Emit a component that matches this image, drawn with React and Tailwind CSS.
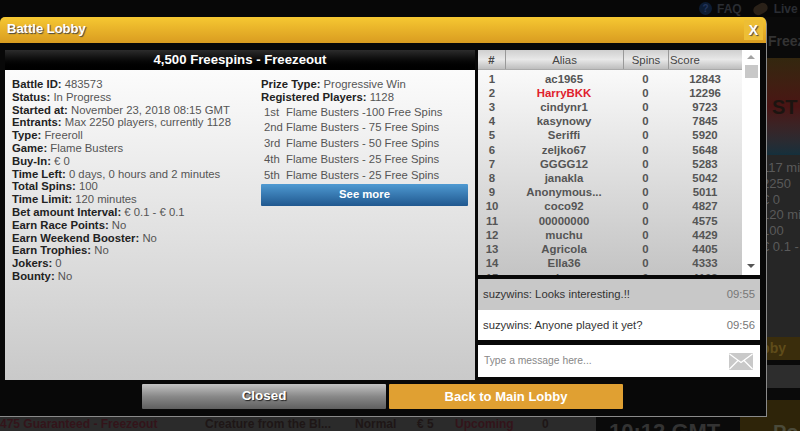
import React from "react";

const details = [
    ["Battle ID:", "483573"],
    ["Status:", "In Progress"],
    ["Started at:", "November 23, 2018 08:15 GMT"],
    ["Entrants:", "Max 2250 players, currently 1128"],
    ["Type:", "Freeroll"],
    ["Game:", "Flame Busters"],
    ["Buy-In:", "€ 0"],
    ["Time Left:", "0 days, 0 hours and 2 minutes"],
    ["Total Spins:", "100"],
    ["Time Limit:", "120 minutes"],
    ["Bet amount Interval:", "€ 0.1 - € 0.1"],
    ["Earn Race Points:", "No"],
    ["Earn Weekend Booster:", "No"],
    ["Earn Trophies:", "No"],
    ["Jokers:", "0"],
    ["Bounty:", "No"],
];

const prizes = [
    ["1st", "Flame Busters -100 Free Spins"],
    ["2nd", "Flame Busters - 75 Free Spins"],
    ["3rd", "Flame Busters - 50 Free Spins"],
    ["4th", "Flame Busters - 25 Free Spins"],
    ["5th", "Flame Busters - 25 Free Spins"],
];

const players = [
    ["ac1965", "12843"],
    ["HarryBKK", "12296"],
    ["cindynr1", "9723"],
    ["kasynowy", "7845"],
    ["Seriffi", "5920"],
    ["zeljko67", "5648"],
    ["GGGG12", "5283"],
    ["janakla", "5042"],
    ["Anonymous...", "5011"],
    ["coco92", "4827"],
    ["00000000", "4575"],
    ["muchu", "4429"],
    ["Agricola", "4405"],
    ["Ella36", "4333"],
    ["alexa", "4102"],
];

const Row = ({ label, value }) => (
    <div className="h-[12.8px] leading-[12.8px] whitespace-nowrap">
        <span className="font-bold text-[#222]">{label}</span> {value}
    </div>
);

// dimmed lobby page that sits behind the dialog
const Background = () => (
    <div className="h-full flex flex-col text-[12px] font-bold">
        <div className="h-[17px] flex items-center pl-[699px] text-[#2a2d33] whitespace-nowrap overflow-hidden">
            <span className="w-[13px] h-[13px] shrink-0 rounded-full bg-[#0c1c33] text-[#23345a] text-[10px] leading-[13px] text-center">?</span>
            <span className="ml-[5px]">FAQ</span>
            <span className="ml-[11px] w-[15px] h-[10px] shrink-0 rounded-[5px] bg-[#2a2118] -rotate-30"></span>
            <span className="ml-[6px]">Live Chat</span>
        </div>
        <div className="h-[400px] shrink-0 pl-[762px] flex flex-col overflow-hidden">
            <div className="h-[41px] shrink-0 pt-[14px] pl-[6px] text-[14px] text-[#333] whitespace-nowrap bg-[#0a0a0a]">Freezeout</div>
            <div className="h-[97px] shrink-0 bg-gradient-to-b from-[#33270f] via-[#4a1414] to-[#14303c] flex items-center text-[20px] text-[#1c1410] pl-[10px]">ST</div>
            <div className="h-[182px] shrink-0 pt-[5px] bg-[#262626] text-[#5a5a5a] font-normal text-[13px] leading-[15.8px] whitespace-nowrap">
                <div>117 min</div>
                <div>2250</div>
                <div>€ 0</div>
                <div>120 min</div>
                <div>100</div>
                <div>€ 0.1 - €</div>
            </div>
            <div className="h-[23px] shrink-0 bg-[#3a2d0c] text-[#5f4c1a] text-[14px] leading-[23px] whitespace-nowrap -ml-[18px] pl-[18px]">
                <span className="-ml-[18px]">Lobby</span>
            </div>
            <div className="h-[5px] shrink-0 bg-[#0a0a0a]"></div>
            <div className="h-[23px] shrink-0 bg-[#2d2d2d]"></div>
            <div className="h-[12px] shrink-0 bg-[#0a0a0a]"></div>
            <div className="flex-1 bg-[#2e2409]"></div>
        </div>
        <div className="h-[14px] shrink-0 flex items-start bg-[#2b2b2b] text-[#33141a] leading-[14px] whitespace-nowrap overflow-hidden">
            <span className="w-[205px] shrink-0">475 Guaranteed - Freezeout</span>
            <span className="w-[150px] shrink-0 text-[#1e1616]">Creature from the Bl...</span>
            <span className="w-[62px] shrink-0 text-[#1e1616]">Normal</span>
            <span className="w-[38px] shrink-0 text-[#1e1616]">€ 5</span>
            <span className="w-[87px] shrink-0">Upcoming</span>
            <span className="w-[54px] shrink-0 text-[#1e1616]">0</span>
            <span className="w-[144px] shrink-0 h-full bg-[#0a0a0a] text-[#333] text-[22px] leading-[30px] pl-[13px]">10:12 GMT</span>
            <span className="flex-1 h-full bg-[#2e2409] text-[#4a4a3a] text-[20px] leading-[30px] pl-[33px]">Po</span>
        </div>
    </div>
);

const App = () => {
    return (
        <div className="relative w-[800px] h-[431px] overflow-hidden bg-[#070707] font-['Liberation_Sans',Arial,sans-serif]">
            <Background />

            {/* Battle lobby dialog */}
            <div className="absolute left-0 top-[17px] w-[767px] h-[400px] flex flex-col bg-[#080808] rounded-tr-[7px] rounded-tl-[3px] border-r border-b border-[#8a8a8a]">
                <header className="h-[26px] shrink-0 flex items-center justify-between rounded-t-[5px] bg-gradient-to-b from-[#f6c832] to-[#d99c20] pl-[7px] pr-[3px]">
                    <h1 className="pb-[2px] text-[13px] font-bold text-white [text-shadow:1px_1px_1px_#444]">Battle Lobby</h1>
                    <button className="w-[19px] h-[20px] bg-[#edbe35] text-[14px] font-bold text-white [text-shadow:1px_1px_1px_#444]">X</button>
                </header>

                <div className="h-[337px] shrink-0 flex gap-[3px] pl-[5px] pt-[7px]">
                    {/* Battle details */}
                    <section className="w-[470px] h-[330px] flex flex-col bg-gradient-to-b from-white to-[#c9c9c9]">
                        <h2 className="h-[20px] shrink-0 bg-gradient-to-b from-[#2c2c2c] to-black text-white text-[13.2px] font-bold text-center leading-[20px]">
                            4,500 Freespins - Freezeout
                        </h2>
                        <div className="flex pl-[7px] pt-[8px] text-[11.3px] text-[#555]">
                            <div className="w-[249px]">
                                {details.map(([label, value]) => (
                                    <Row key={label} label={label} value={value} />
                                ))}
                            </div>
                            <div className="w-[207px]">
                                <Row label="Prize Type:" value="Progressive Win" />
                                <Row label="Registered Players:" value="1128" />
                                <div className="pt-[1px]">
                                    {prizes.map(([place, prize]) => (
                                        <div key={place} className="flex h-[15.8px] leading-[15.8px] pl-[3px] whitespace-nowrap">
                                            <span className="w-[22px]">{place}</span>
                                            <span>{prize}</span>
                                        </div>
                                    ))}
                                </div>
                                <button className="w-[207px] h-[22px] block rounded-[1px] bg-gradient-to-b from-[#4f9ad2] to-[#20588f] text-white text-[11.3px] font-bold">
                                    See more
                                </button>
                            </div>
                        </div>
                    </section>

                    {/* Leaderboard and chat */}
                    <div className="w-[282px] flex flex-col">
                        <div className="h-[225px] shrink-0 flex bg-white overflow-hidden">
                            <div className="w-[264px] h-full overflow-hidden bg-gradient-to-b from-white to-[#c4c4c4] text-[11.4px] font-bold text-[#555]">
                                <div className="h-[20px] mb-[1.5px] flex bg-gradient-to-b from-[#cfcfcf] via-[#e8e8e8] to-[#bdbdbd] border-b border-[#aaa] leading-[21px] font-normal text-[#444]">
                                    <div className="w-[28px] text-center border-r border-[#999] font-bold">#</div>
                                    <div className="w-[118px] text-center border-r border-[#999]">Alias</div>
                                    <div className="w-[45px] text-center border-r border-[#999]">Spins</div>
                                    <div className="pl-[1px]">Score</div>
                                </div>
                                {players.map(([alias, score], i) => (
                                    <div key={alias} className="flex h-[14.23px] leading-[14.23px]">
                                        <div className="w-[27px] pl-[1px] text-center">{i + 1}</div>
                                        <div className={`w-[118px] text-center ${alias === "HarryBKK" ? "text-[#e0202c]" : ""}`}>{alias}</div>
                                        <div className="w-[45px] text-center">0</div>
                                        <div className="w-[74px] text-center">{score}</div>
                                    </div>
                                ))}
                            </div>
                            {/* Scrollbar */}
                            <div className="w-[18px] flex flex-col items-center">
                                <span className="mt-[5px] w-0 h-0 border-x-[4px] border-x-transparent border-b-[4px] border-b-[#a3a3a3]"></span>
                                <span className="mt-[6px] w-[13px] h-[13px] bg-[#c8c8c8]"></span>
                                <span className="mt-auto mb-[7px] w-0 h-0 border-x-[4px] border-x-transparent border-t-[4px] border-t-[#555]"></span>
                            </div>
                        </div>

                        <div className="mt-[4px] text-[11.3px] text-[#333]">
                            <div className="h-[31px] px-[5px] flex items-center justify-between bg-[#c8c8c8]">
                                <span>suzywins: Looks interesting.!!</span>
                                <span className="text-[#777]">09:55</span>
                            </div>
                            <div className="h-[30px] px-[5px] flex items-center justify-between bg-white">
                                <span>suzywins: Anyone played it yet?</span>
                                <span className="text-[#777]">09:56</span>
                            </div>
                        </div>

                        <div className="mt-[5px] h-[32px] flex items-center justify-between bg-white px-[6px]">
                            <span className="text-[10.3px] text-[#888]">Type a message here...</span>
                            <svg width="24" height="17" viewBox="0 0 24 17" className="mr-[1px]">
                                <rect width="24" height="17" rx="1" fill="#c9c9c9" />
                                <path d="M0.5 1 L12 9.5 L23.5 1 M0.5 16 L9 7.5 M23.5 16 L15 7.5" fill="none" stroke="#fff" strokeWidth="1.3" />
                            </svg>
                        </div>
                    </div>
                </div>

                <div className="flex gap-[3px] pl-[142px] pt-[4px]">
                    <button className="w-[244px] h-[25px] rounded-[1px] bg-gradient-to-b from-[#c4c4c4] via-[#888] to-[#5f5f5f] text-white text-[13.4px] font-bold [text-shadow:1px_1px_1px_#222]">
                        Closed
                    </button>
                    <button className="w-[234px] h-[25px] rounded-[1px] bg-[#e0a032] text-white text-[13px] font-bold">
                        Back to Main Lobby
                    </button>
                </div>
            </div>
        </div>
    );
};

export default App;
